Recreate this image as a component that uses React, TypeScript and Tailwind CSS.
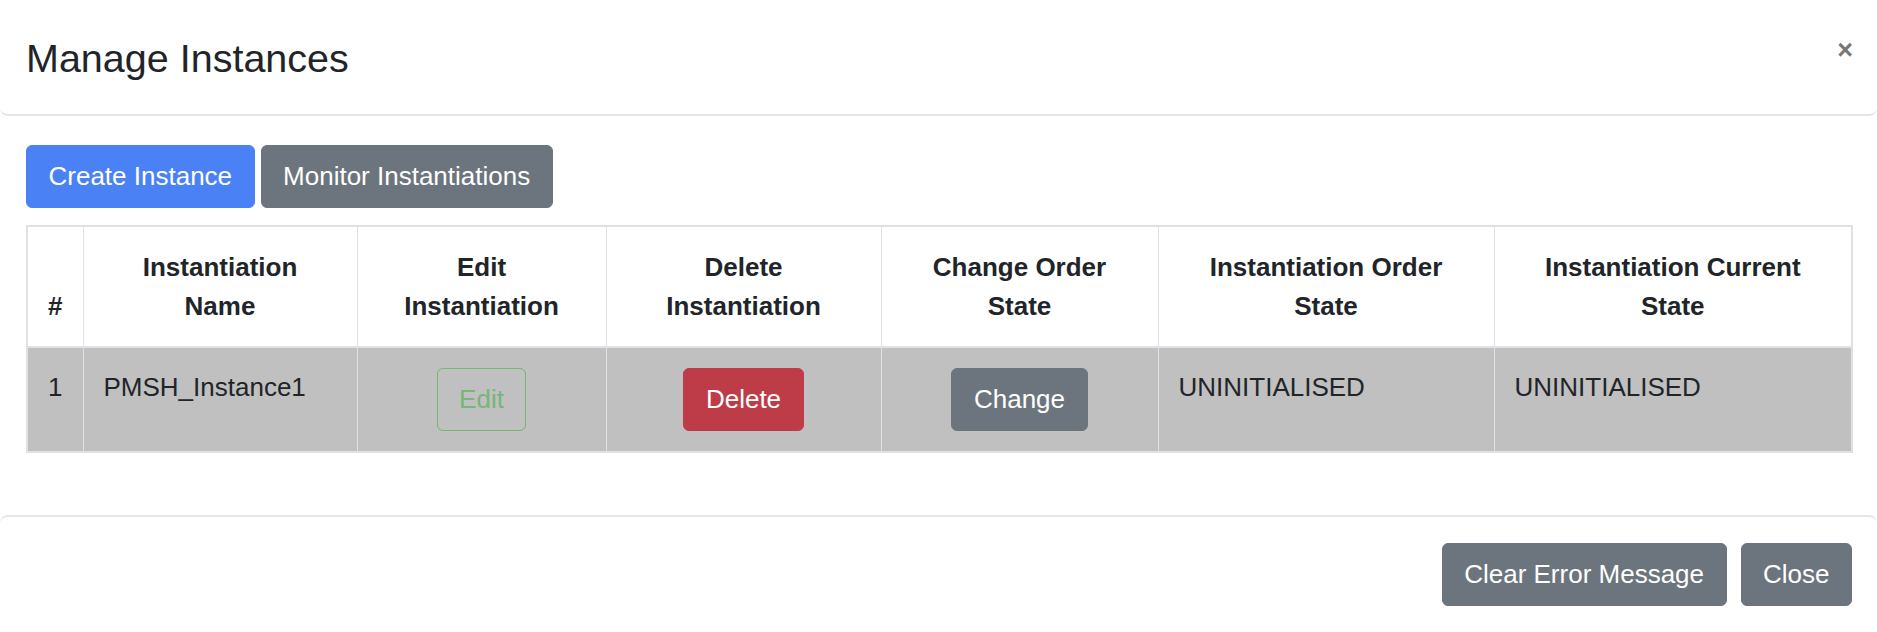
import React from "react";

const btnBase =
  "inline-block border rounded-[6px] px-[21.5px] py-[11px] text-[26px] leading-[39px] font-normal whitespace-nowrap";

export default function App() {
  const headers: React.ReactNode[] = [
    "#",
    <>Instantiation<br />Name</>,
    <>Edit<br />Instantiation</>,
    <>Delete<br />Instantiation</>,
    <>Change Order<br />State</>,
    <>Instantiation Order<br />State</>,
    <>Instantiation Current<br />State</>,
  ];
  const widths = [56, 274, 249, 275, 277, 336, 358];
  return (
    <div className="min-h-screen h-[632px] flex flex-col bg-white text-[#212529] font-['Liberation_Sans',Arial,sans-serif]">
      {/* Header */}
      <div className="h-[116px] shrink-0 flex justify-between items-start pl-[26px] pr-[24px] border-b-2 border-[#e3e6ea] rounded-b-[8px]">
        <h4 className="pt-[29px] text-[39.5px] leading-[58px] font-normal">Manage Instances</h4>
        <button className="mt-[36px] text-[27px] leading-[28px] font-bold text-[#767676]">×</button>
      </div>

      {/* Body */}
      <div className="flex-1 px-[26px] pt-[29px]">
        <div className="flex gap-[6px]">
          <button className={`${btnBase} bg-[#4a82f6] border-[#4a82f6] text-white`}>Create Instance</button>
          <button className={`${btnBase} bg-[#6c757d] border-[#6c757d] text-white`}>Monitor Instantiations</button>
        </div>
        <table className="mt-[17px] w-full table-fixed border-collapse border-2 border-[#dee2e6] text-[26px] leading-[39px]">
          <colgroup>
            {widths.map((w, i) => (
              <col key={i} style={{ width: w }} />
            ))}
          </colgroup>
          <thead>
            <tr>
              {headers.map((h, i) => (
                <th
                  key={i}
                  className="border border-[#dee2e6] border-b-2 px-[20px] pt-[20.5px] pb-[20px] align-bottom text-center font-bold"
                >
                  {h}
                </th>
              ))}
            </tr>
          </thead>
          <tbody>
            <tr className="bg-[#c0c0c0]">
              <td className="border border-[#dee2e6] px-[20px] py-[20px] align-top text-left">1</td>
              <td className="border border-[#dee2e6] px-[20px] py-[20px] align-top text-left">PMSH_Instance1</td>
              <td className="border border-[#dee2e6] px-[20px] py-[20px] align-top text-center">
                <button className={`${btnBase} bg-transparent border-[#76b677] text-[#76b677]`}>Edit</button>
              </td>
              <td className="border border-[#dee2e6] px-[20px] py-[20px] align-top text-center">
                <button className={`${btnBase} bg-[#bd3c48] border-[#bd3c48] text-white`}>Delete</button>
              </td>
              <td className="border border-[#dee2e6] px-[20px] py-[20px] align-top text-center">
                <button className={`${btnBase} bg-[#6c757d] border-[#6c757d] text-white`}>Change</button>
              </td>
              <td className="border border-[#dee2e6] px-[20px] py-[20px] align-top text-left">UNINITIALISED</td>
              <td className="border border-[#dee2e6] px-[20px] py-[20px] align-top text-left">UNINITIALISED</td>
            </tr>
          </tbody>
        </table>
      </div>

      {/* Footer */}
      <div className="h-[117px] shrink-0 flex justify-end items-start gap-[14px] pr-[25px] pt-[26px] border-t-2 border-[#e3e6ea] rounded-t-[8px]">
        <button className={`${btnBase} bg-[#6c757d] border-[#6c757d] text-white`}>Clear Error Message</button>
        <button className={`${btnBase} bg-[#6c757d] border-[#6c757d] text-white`}>Close</button>
      </div>
    </div>
  );
}
